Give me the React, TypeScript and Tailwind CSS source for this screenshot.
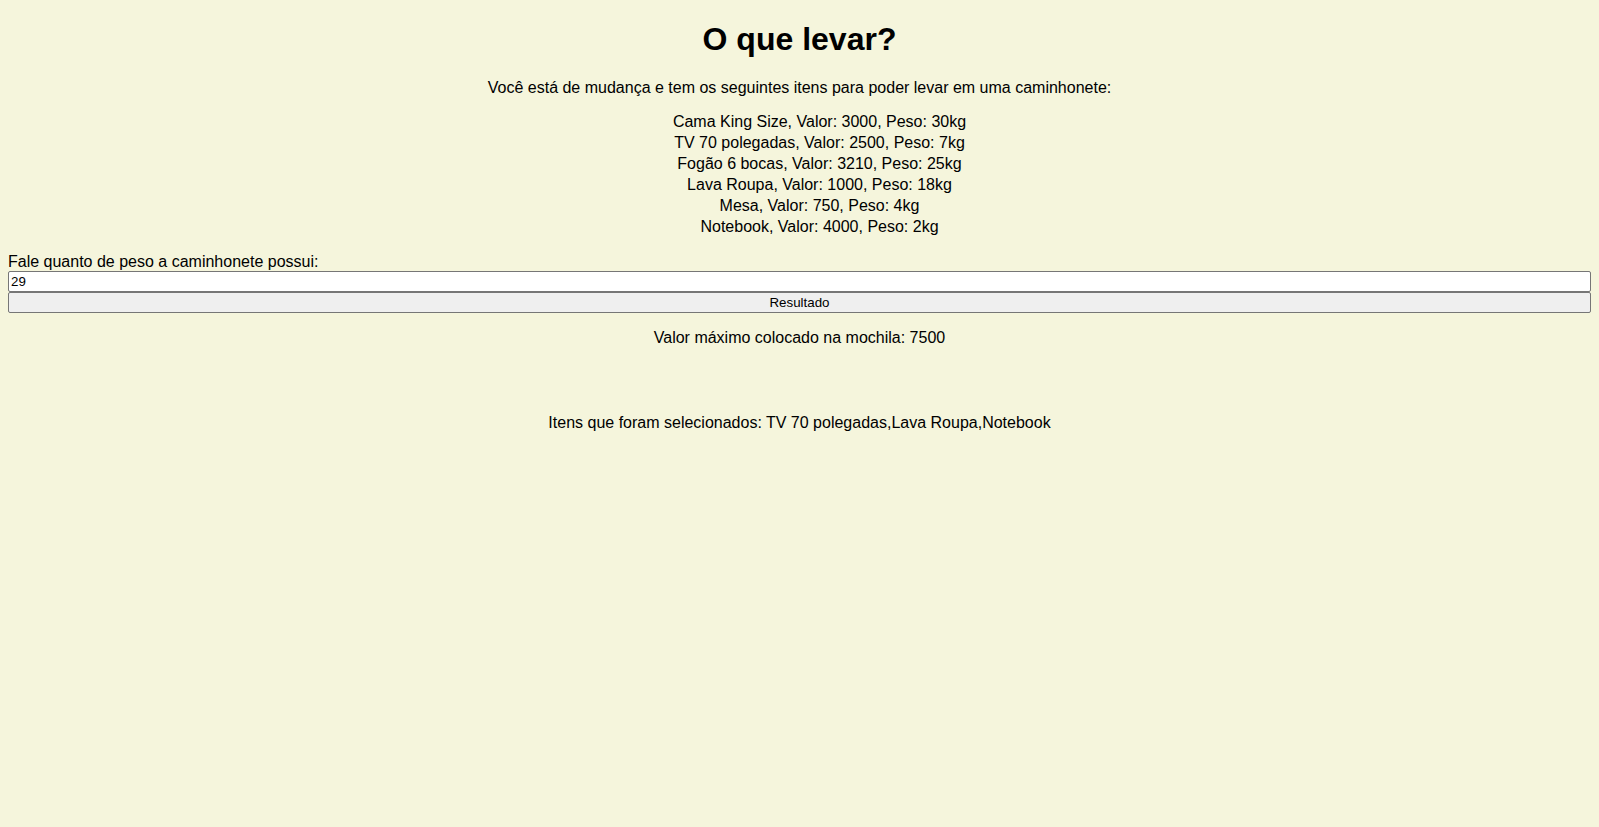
import React, { useState } from 'react';

const itens = [
  { nome: 'Cama King Size', valor: 3000, peso: 30 },
  { nome: 'TV 70 polegadas', valor: 2500, peso: 7 },
  { nome: 'Fogão 6 bocas', valor: 3210, peso: 25 },
  { nome: 'Lava Roupa', valor: 1000, peso: 18 },
  { nome: 'Mesa', valor: 750, peso: 4 },
  { nome: 'Notebook', valor: 4000, peso: 2 },
];

const App: React.FC = () => {
  const [peso, setPeso] = useState('29');

  return (
    <div className="min-h-screen bg-[#f5f5dc] px-2 pt-[21px] font-['Liberation_Sans',Arial,sans-serif] text-black text-base">
      <h1 className="text-[32px] font-bold text-center leading-[37px]">O que levar?</h1>

      <p className="text-center mt-[21px] leading-[18px]">
        Você está de mudança e tem os seguintes itens para poder levar em uma caminhonete:
      </p>

      <ul className="text-center mt-[14px] pl-10 leading-[21px] list-none">
        {itens.map((item) => (
          <li key={item.nome}>
            {item.nome}, Valor: {item.valor}, Peso: {item.peso}kg
          </li>
        ))}
      </ul>

      <label htmlFor="peso" className="block mt-[16px] leading-[18px]">
        Fale quanto de peso a caminhonete possui:
      </label>
      <input
        id="peso"
        type="number"
        value={peso}
        onChange={(e) => setPeso(e.target.value)}
        className="block w-full h-[21px] bg-white border border-[#767676] rounded-[2px] px-[2px] text-[13.33px] leading-[15px] outline-none"
      />
      <button className="block w-full h-[21px] bg-[#efefef] border border-[#767676] rounded-[2px] text-[13.33px] leading-[15px]">
        Resultado
      </button>

      <p className="text-center mt-[16px] leading-[18px]">Valor máximo colocado na mochila: 7500</p>

      <p className="text-center mt-[67px] leading-[18px]">
        Itens que foram selecionados: TV 70 polegadas,Lava Roupa,Notebook
      </p>
    </div>
  );
};

export default App;
